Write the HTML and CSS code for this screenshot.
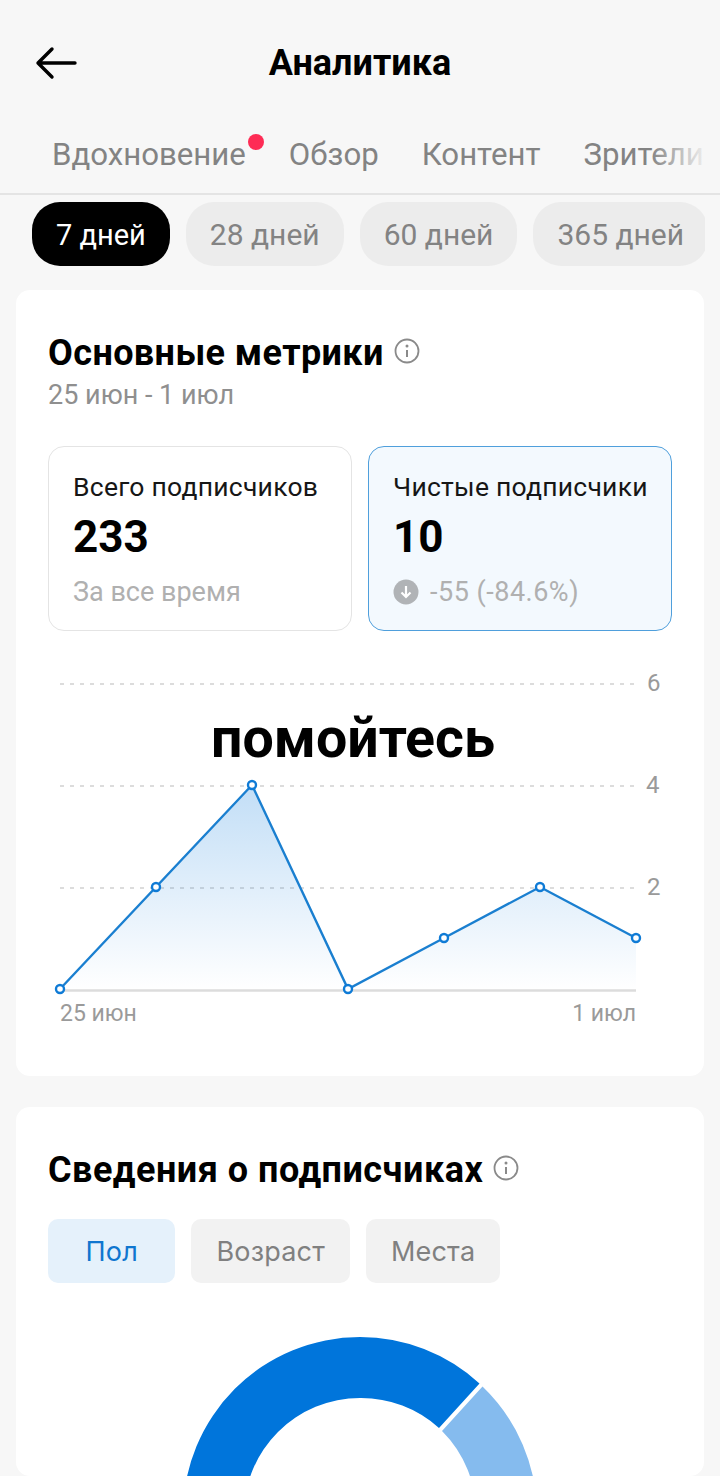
FILE: index.html
```html
<!DOCTYPE html>
<html lang="ru">
<head>
    <meta charset="UTF-8">
    <meta name="viewport" content="width=device-width, initial-scale=1.0">
    <title>Аналитика</title>
    <link rel="stylesheet" href="styles.css">
</head>
<body>
    <header class="top-bar">
        <svg class="back-icon" width="42" height="34" viewBox="0 0 42 34">
            <path d="M40 17H3M17 3L3 17L17 31" fill="none" stroke="#000" stroke-width="3.4" stroke-linecap="round" stroke-linejoin="round"/>
        </svg>
        <h1>Аналитика</h1>
    </header>

    <nav class="tabs">
        <span class="tab tab-dot">Вдохновение</span>
        <span class="tab">Обзор</span>
        <span class="tab">Контент</span>
        <span class="tab">Зрители</span>
    </nav>

    <div class="pills">
        <span class="pill active">7 дней</span>
        <span class="pill">28 дней</span>
        <span class="pill">60 дней</span>
        <span class="pill">365 дней</span>
    </div>

    <section class="card metrics-card">
        <h2>Основные метрики
            <svg class="info-icon" width="26" height="26" viewBox="0 0 26 26">
                <circle cx="13" cy="13" r="11.5" fill="none" stroke="#8a8a8a" stroke-width="1.8"/>
                <circle cx="13" cy="8" r="1.5" fill="#8a8a8a"/>
                <path d="M13 12v7" stroke="#8a8a8a" stroke-width="2"/>
            </svg>
        </h2>
        <p class="date-range">25 июн - 1 июл</p>

        <div class="metric-grid">
            <div class="metric">
                <div class="metric-label">Всего подписчиков</div>
                <div class="metric-value">233</div>
                <div class="metric-note">За все время</div>
            </div>
            <div class="metric selected">
                <div class="metric-label">Чистые подписчики</div>
                <div class="metric-value">10</div>
                <div class="metric-note">
                    <svg width="26" height="26" viewBox="0 0 26 26">
                        <circle cx="13" cy="13" r="12.5" fill="#b0b3b6"/>
                        <path d="M13 7v11M8.5 13.5L13 18l4.5-4.5" fill="none" stroke="#fff" stroke-width="2.2"/>
                    </svg>
                    <span class="change">-55 (-84.6%)</span>
                </div>
            </div>
        </div>

        <div class="chart">
            <svg width="640" height="370" viewBox="0 0 640 370">
                <defs>
                    <linearGradient id="area" x1="0" y1="0" x2="0" y2="1">
                        <stop offset="0" stop-color="#0075db" stop-opacity="0.24"/>
                        <stop offset="1" stop-color="#0075db" stop-opacity="0"/>
                    </linearGradient>
                </defs>
                <g class="grid-lines">
                    <path d="M12 24H590"/>
                    <path d="M12 126H590"/>
                    <path d="M12 228H590"/>
                </g>
                <g class="y-labels">
                    <text x="599" y="31">6</text>
                    <text x="598" y="133">4</text>
                    <text x="599" y="235">2</text>
                </g>
                <path d="M12 330.5H588" stroke="#dcdcdc" stroke-width="2.5"/>
                <path d="M12 329L108 227L204 125L300 329L396 278L492 227L588 278V330H12Z" fill="url(#area)"/>
                <path d="M12 329L108 227L204 125L300 329L396 278L492 227L588 278" fill="none" stroke="#1a7fd0" stroke-width="2.4"/>
                <g class="dots">
                    <circle cx="12" cy="329" r="4"/>
                    <circle cx="108" cy="227" r="4"/>
                    <circle cx="204" cy="125" r="4"/>
                    <circle cx="300" cy="329" r="4"/>
                    <circle cx="396" cy="278" r="4"/>
                    <circle cx="492" cy="227" r="4"/>
                    <circle cx="588" cy="278" r="4"/>
                </g>
                <text class="x-label" x="12" y="361">25 июн</text>
                <text class="x-label" x="588" y="361" text-anchor="end">1 июл</text>
            </svg>
            <div class="chart-overlay">помойтесь</div>
        </div>
    </section>

    <section class="card followers-card">
        <h2 class="wide">Сведения о подписчиках
            <svg class="info-icon" width="26" height="26" viewBox="0 0 26 26">
                <circle cx="13" cy="13" r="11.5" fill="none" stroke="#8a8a8a" stroke-width="1.8"/>
                <circle cx="13" cy="8" r="1.5" fill="#8a8a8a"/>
                <path d="M13 12v7" stroke="#8a8a8a" stroke-width="2"/>
            </svg>
        </h2>
        <div class="segments">
            <span class="segment active">Пол</span>
            <span class="segment">Возраст</span>
            <span class="segment">Места</span>
        </div>
        <svg class="donut" width="400" height="260" viewBox="0 0 400 260">
            <path d="M200 17A177 177 0 0 1 319.5 63.5L279 108A116 116 0 0 0 200 78A116 116 0 0 0 84 194V260H23V194A177 177 0 0 1 200 17Z" fill="#0075db"/>
            <path d="M322.5 66.5A177 177 0 0 1 377 194V260H316V194A116 116 0 0 0 282 111Z" fill="#85bbee"/>
        </svg>
    </section>
</body>
</html>
```

FILE: styles.css
```css
html, body {
    margin: 0;
    padding: 0;
}
body {
    width: 720px;
    height: 1476px;
    overflow: hidden;
    background-color: #f7f7f7;
    font-family: Roboto, "Noto Sans", sans-serif;
    color: #000;
}

.top-bar {
    display: grid;
    grid-template-columns: 1fr auto 1fr;
    align-items: center;
    height: 126px;
    padding: 0 35px;
    box-sizing: border-box;
}
.top-bar h1 {
    grid-column: 2;
    margin: 0;
    font-size: 36px;
    font-weight: 700;
}
.back-icon {
    grid-column: 1;
    grid-row: 1;
}

.tabs {
    display: flex;
    gap: 43px;
    height: 69px;
    padding: 9px 0 0 52px;
    box-sizing: border-box;
    border-bottom: 2px solid #e4e4e4;
    overflow: hidden;
    white-space: nowrap;
    position: relative;
}
.tabs::after {
    content: "";
    position: absolute;
    top: 0;
    bottom: 0;
    right: 0;
    width: 70px;
    background: linear-gradient(to right, rgba(247, 247, 247, 0), #f7f7f7 85%);
}
.tab {
    position: relative;
    font-size: 31.2px;
    line-height: 40px;
    color: #838383;
}
.tab-dot::after {
    content: "";
    position: absolute;
    top: -1px;
    right: -18px;
    width: 16px;
    height: 16px;
    border-radius: 50%;
    background-color: #fe2c55;
}

.pills {
    display: flex;
    gap: 16px;
    width: 673px;
    margin: 7px 0 24px 32px;
    overflow: hidden;
}
.pill {
    flex: none;
    height: 64px;
    line-height: 66px;
    padding: 0 24px;
    border-radius: 28px;
    background-color: #ececec;
    color: #838383;
    font-size: 30px;
    white-space: nowrap;
}
.pill.active {
    background-color: #000;
    color: #fff;
    font-size: 29px;
}

.card {
    margin: 0 16px;
    padding: 0 32px;
    background-color: #fff;
    border-radius: 14px;
}
.metrics-card {
    height: 786px;
    margin-bottom: 31px;
    padding-top: 42px;
    box-sizing: border-box;
}
.followers-card {
    height: 369px;
    padding-top: 42px;
    box-sizing: border-box;
    overflow: hidden;
}

h2 {
    display: flex;
    align-items: center;
    gap: 10px;
    margin: 0;
    font-size: 36px;
    line-height: 42px;
    font-weight: 700;
    letter-spacing: 0.4px;
}
h2.wide {
    letter-spacing: 0.5px;
}
.info-icon {
    margin-top: -4px;
}

.date-range {
    margin: 5px 0 0;
    font-size: 27px;
    line-height: 32px;
    color: #8f8f8f;
}

.metric-grid {
    display: grid;
    grid-template-columns: 304px 304px;
    gap: 16px;
    margin-top: 35px;
}
.metric {
    height: 185px;
    padding: 24px 0 0 24px;
    box-sizing: border-box;
    border: 1.5px solid #e4e4e4;
    border-radius: 16px;
}
.metric.selected {
    border-color: #4f9fdc;
    background-color: #f3f9fe;
}
.metric-label {
    font-size: 26.5px;
    line-height: 32px;
    letter-spacing: 0.25px;
    color: #161616;
}
.metric-value {
    margin-top: 8px;
    font-size: 44px;
    line-height: 52px;
    font-weight: 700;
}
.metric-note {
    display: flex;
    align-items: center;
    gap: 11px;
    margin-top: 13px;
    font-size: 27px;
    line-height: 32px;
    color: #b0b0b0;
}
.change {
    letter-spacing: 0.5px;
}

.chart {
    position: relative;
    margin-top: 29px;
    height: 370px;
}
.chart svg {
    display: block;
}
.chart-overlay {
    position: absolute;
    left: 0;
    right: 14px;
    top: 47px;
    text-align: center;
    font-size: 55.5px;
    line-height: 64px;
    font-weight: 700;
}
.grid-lines path {
    stroke: #dcdcdc;
    stroke-width: 2;
    stroke-dasharray: 4 6;
    fill: none;
}
.y-labels text {
    font-size: 24px;
    fill: #9a9a9a;
}
.x-label {
    font-size: 23px;
    fill: #9a9a9a;
}
.dots circle {
    fill: #fff;
    stroke: #0f7bd6;
    stroke-width: 2.4;
}

.segments {
    display: flex;
    gap: 16px;
    margin-top: 28px;
}
.segment {
    height: 64px;
    line-height: 66px;
    padding: 0 25px;
    border-radius: 10px;
    background-color: #f2f2f2;
    color: #808080;
    font-family: Inter, Roboto, sans-serif;
    font-size: 27px;
    letter-spacing: 0.2px;
}
.segment.active {
    padding: 0 37.5px;
    background-color: #e5f1fb;
    color: #0f76cf;
}
.donut {
    display: block;
    margin: 37px 0 0 112px;
}
```
